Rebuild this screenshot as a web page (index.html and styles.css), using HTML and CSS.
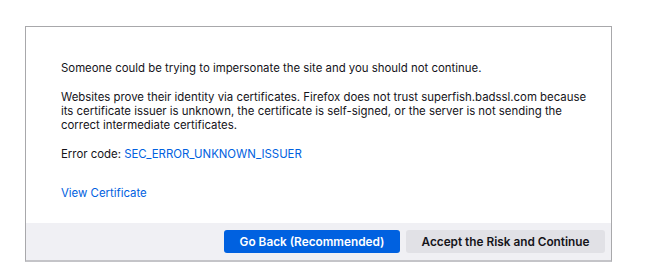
FILE: index.html
```html
<!DOCTYPE html>
<html lang="en">
<head>
  <meta charset="UTF-8">
  <meta name="viewport" content="width=device-width, initial-scale=1.0">
  <title>Warning: Potential Security Risk Ahead</title>
  <link rel="stylesheet" href="styles.css">
</head>
<body>
  <div class="panel">
    <div class="details">
      <p class="lead">Someone could be trying to impersonate the site and you should not continue.</p>
      <p class="info">Websites prove their identity via certificates. Firefox does not trust superfish.badssl.com because its certificate issuer is unknown, the certificate is self-signed, or the server is not sending the correct intermediate certificates.</p>
      <p class="code">Error code: <a href="#">SEC_ERROR_UNKNOWN_ISSUER</a></p>
      <p class="cert"><a href="#">View Certificate</a></p>
    </div>
    <div class="actions">
      <button class="btn primary">Go Back (Recommended)</button>
      <button class="btn">Accept the Risk and Continue</button>
    </div>
  </div>
</body>
</html>
```

FILE: styles.css
```css
body {
  margin: 0;
  background-color: white;
  color: #15141a;
  font-family: Inter, "Liberation Sans", Arial, sans-serif;
  font-size: 11.4px;
  line-height: 14px;
}
.panel {
  margin: 26px 0 0 25px;
  width: 585px;
  border: 1px solid #a8a8ab;
  border-bottom: 2px solid #c4c4c8;
}
.details {
  padding: 34px 20px 23px 35px;
}
.details p {
  margin: 0;
}
.info {
  margin-top: 15px !important;
}
.code {
  margin-top: 15px !important;
}
.cert {
  margin-top: 25px !important;
}
a {
  color: #0061e0;
  text-decoration: none;
}
.actions {
  display: flex;
  justify-content: flex-end;
  gap: 6px;
  padding: 7px 6px 7px 0;
  background-color: #f0f0f4;
}
.btn {
  height: 23px;
  padding: 0;
  width: 199px;
  font-family: Inter, "Liberation Sans", Arial, sans-serif;
  font-size: 11.8px;
  font-weight: 600;
  border: none;
  border-radius: 3px;
  background-color: #e1e1e6;
  color: #15141a;
  cursor: pointer;
}
.btn.primary {
  width: 176px;
  background-color: #0061e0;
  color: white;
}
```
